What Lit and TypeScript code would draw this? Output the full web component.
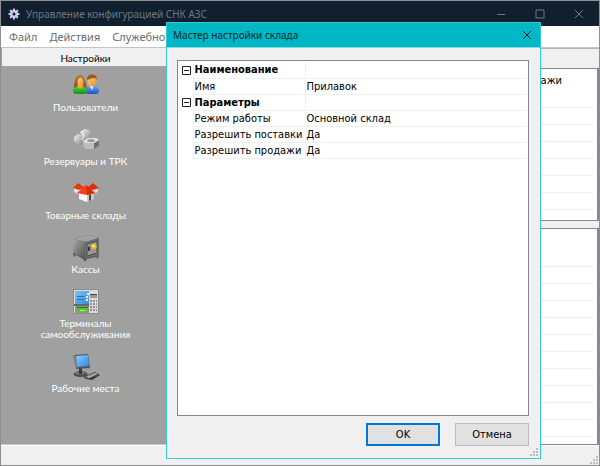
import { LitElement, html, svg, css } from "lit";
import { customElement, state } from "lit/decorators.js";

const gear = html`<svg class="gear" viewBox="0 0 24 24" aria-hidden="true">
  <g fill="#c9c9ea">
    ${[0, 45, 90, 135].map((a) => svg`<rect x="10" y="1" width="4" height="22" rx="1" transform="rotate(${a} 12 12)"/>`)}
    <circle cx="12" cy="12" r="8"/>
  </g>
  <circle cx="12" cy="12" r="3" fill="#11202f"/>
</svg>`;

const users = svg`
  <defs>
    <linearGradient id="hair" x2="0" y2="1"><stop stop-color="#b87830"/><stop offset="1" stop-color="#7a4414"/></linearGradient>
    <linearGradient id="face" x2="1" y2="1"><stop stop-color="#ffcf80"/><stop offset="1" stop-color="#e88c28"/></linearGradient>
    <linearGradient id="blue" x2="0" y2="1"><stop stop-color="#7cb0f4"/><stop offset="1" stop-color="#1850c4"/></linearGradient>
    <linearGradient id="green" x2="0" y2="1"><stop stop-color="#58d838"/><stop offset="1" stop-color="#149010"/></linearGradient>
  </defs>
  <path d="M12 17c0-3 3-5 7-5s7 2 7 6c0 2-1 3-4 3h-6c-3 0-4-1-4-4z" fill="url(#blue)"/>
  <path d="M16 12l3 5 2-5z" fill="#e8f0ff"/>
  <ellipse cx="19" cy="8" rx="4.500" ry="5.500" fill="url(#face)"/>
  <path d="M14 7c0-4 2-5.500 5-5.500s5 1.500 5 5.500c-1-2-2-2-4-2-2 1-4 1-6 2z" fill="#9a5a1c"/>
  <path d="M1 17C1 8 3 2 7 2s6 6 7 16l-6 1z" fill="url(#hair)"/>
  <path d="M0 18c0-3 3-5 7-5s7 2 7 5c0 2-1 3-4 3H4c-3 0-4-1-4-3z" fill="url(#green)"/>
  <ellipse cx="7.500" cy="10" rx="3" ry="5.500" fill="url(#face)"/>`;

const tanks = svg`
  <defs>
    <linearGradient id="steel" x2="1" y2="1"><stop stop-color="#f4f4f4"/><stop offset="1" stop-color="#7c7c7c"/></linearGradient>
  </defs>
  <path d="M8 4l4-2 4 1 3 5-3 5-7 1z" fill="url(#steel)"/>
  <path d="M1 10l4-3 5 1 2 5-3 5-5-1-3-3z" fill="url(#steel)"/>
  <path d="M7 5l4 3-2 5" fill="none" stroke="#f5f5f5"/>
  <path d="M10 14l5-3h8l3 2v6l-5 3h-8l-3-3z" fill="#bcbcbc"/>
  <path d="M21 16l5-3v6l-5 3z" fill="#707070"/>
  <path d="M10 14l5-3h8l3 2-5 3h-8z" fill="#e2e2e2"/>
  <ellipse cx="18" cy="13.500" rx="3.800" ry="1.500" fill="#969696"/>`;

const houses = svg`
  <path d="M1 7h11v6H6l-5-2z" fill="#e4e4e4"/>
  <path d="M0 7l5-5 7 5-6 2z" fill="#e83814"/>
  <path d="M14 7h11v4l-5 2h-6z" fill="#d8d8d8"/>
  <path d="M14 7l6-5 6 5-6 2z" fill="#dc300e"/>
  <path d="M6 11h8v10l-8-3z" fill="#fafafa"/>
  <path d="M14 11h7v7l-7 3z" fill="#cccccc"/>
  <path d="M16 14l2-1v6l-2 1z" fill="#484848"/>
  <path d="M4 12l9-8 9 8-8 2z" fill="#f44018"/>
  <path d="M13 4l9 8-8 2z" fill="#d82a08"/>`;

const safe = svg`
  <defs>
    <linearGradient id="door" x2="1" y2="1"><stop stop-color="#a8a8a8"/><stop offset="1" stop-color="#545454"/></linearGradient>
  </defs>
  <path d="M0 4L15 0l11 3v17l-1 4-2-2-9 2-2 3-2-3-7-4-2 2-1-3z" fill="#5c5c5c"/>
  <path d="M0 4L15 0l11 3-13 4z" fill="#a2a2a2"/>
  <path d="M0 4l12 3v16L0 18z" fill="url(#door)"/>
  <path d="M12 7l14-4v17l-14 3z" fill="#707070"/>
  <path d="M14 9l10-3v12l-10 3z" fill="#969696" stroke="#4c4c4c"/>
  <path d="M15 12l2-.500v4l-2 .500z" fill="#333"/>
  <circle cx="21" cy="11.500" r="2.700" fill="#e8b820"/>
  <circle cx="20.500" cy="11" r="1.200" fill="#fff088"/>`;

const terminal = svg`
  <defs>
    <linearGradient id="lcd" x2="1" y2="1"><stop stop-color="#7cc4f8"/><stop offset="1" stop-color="#3a8cd8"/></linearGradient>
  </defs>
  <rect x=".500" y=".500" width="25" height="24" fill="#dcdcd6" stroke="#8c8c8c"/>
  <rect x="2" y="2" width="14" height="13" fill="url(#lcd)"/>
  <path d="M4 7.500h7M4 10.500h7" stroke="#2a70bc"/>
  <path d="M14 5h2M13 8h2M13 11h2" stroke="#e6f4ff" stroke-width="2"/>
  <rect x="1" y="15" width="15" height="2" fill="#606870"/>
  <rect x="2" y="17" width="14" height="7" fill="#8c948c"/>
  <rect x="4" y="18" width="11" height="5" fill="#55c828"/>
  <path d="M4 18.500h11" stroke="#2a7818"/>
  <path d="M7 21.500h5" stroke="#b8f090"/>
  <rect x="17" y="5" width="7" height="4" fill="#999"/>
  <path d="M17 5.500h7" stroke="#444"/>
  <path d="M17 12h2M20 12h2M23 12h1M17 15h2M20 15h2M23 15h1M17 18h2M20 18h2M23 18h1M17 21h2M20 21h2M23 21h1" stroke="#909090" stroke-width="2"/>`;

const computer = svg`
  <defs>
    <linearGradient id="screen" x2="1" y2="1"><stop stop-color="#90d0ff"/><stop offset="1" stop-color="#2c84e0"/></linearGradient>
  </defs>
  <ellipse cx="7.500" cy="20" rx="7" ry="3" fill="#4c4c4c"/>
  <ellipse cx="7" cy="19" rx="5" ry="1.500" fill="#787878"/>
  <path d="M6 14h3v6H6z" fill="#383838"/>
  <path d="M0 1l15-1 2 14-14 1z" fill="#545454"/>
  <path d="M0 1h2l2 13-1 1z" fill="#8a8a8a"/>
  <path d="M3 2l12-1 1 11-12 1z" fill="url(#screen)"/>
  <path d="M10 23l12-5 5 3-8 5-6-1z" fill="#3c3c3c"/>
  <path d="M12 23l10-4 3 1-9 4z" fill="#c4c4c4"/>
  <path d="M14 23l9-3" stroke="#666" stroke-dasharray="1 1"/>`;

const sections = [
  { label: "Пользователи", icon: users },
  { label: "Резервуары и ТРК", icon: tanks },
  { label: "Товарные склады", icon: houses },
  { label: "Кассы", icon: safe },
  { label: "Терминалы самообслуживания", icon: terminal },
  { label: "Рабочие места", icon: computer },
];

const groups = [
  { title: "Наименование", rows: [["Имя", "Прилавок"]] },
  {
    title: "Параметры",
    rows: [
      ["Режим работы", "Основной склад"],
      ["Разрешить поставки", "Да"],
      ["Разрешить продажи", "Да"],
    ],
  },
];

const closeGlyph = html`<svg class="glyph" viewBox="0 0 10 10" aria-hidden="true"><path d="M1 1l8 8M9 1l-8 8"/></svg>`;

const grip = html`<svg class="grip" viewBox="0 0 8 8" aria-hidden="true">
  <path d="M6 0h2v2H6zM3 3h2v2H3zM6 3h2v2H6zM0 6h2v2H0zM3 6h2v2H3zM6 6h2v2H6z"/>
</svg>`;

const controls = css`
  * { box-sizing: border-box; }
  button { font: inherit; color: inherit; background: none; border: 0; padding: 0; margin: 0; }
  svg { display: block; overflow: visible; }
  .glyph { width: 10px; height: 10px; fill: none; stroke: currentColor; }
  .grip { width: 8px; height: 8px; fill: #bcbcbc; }
`;

@customElement("warehouse-dialog")
class WarehouseDialog extends LitElement {
  @state() closed: string[] = [];

  static styles = [controls, css`
    :host { display: flex; flex-direction: column; background: #f0f0f0; border: 1px solid #35cbd2; color: #000; }
    .bar { display: flex; align-items: center; justify-content: space-between; height: 25px; padding: 0 8px 0 6px; background: #00b7c6; color: #06282c; font: 10px/16px "Noto Sans", sans-serif; border-bottom: 1px solid #7fdce2; }
    h2 { margin: 0; font: inherit; }
    .content { flex: 1; display: flex; flex-direction: column; padding: 12px 11px 0 10px; }
    .grid { flex: 1; border: 1px solid #828790; background: #fff; padding: 1px; }
    table { width: 100%; border-collapse: collapse; table-layout: fixed; font: 11px/15px "DejaVu Sans Condensed", "DejaVu Sans", sans-serif; }
    .gutter { width: 14px; }
    .names { width: 112px; }
    th, td { height: 16px; padding: 0 0 0 1px; text-align: left; font-weight: 400; white-space: nowrap; border: 1px solid #f0f0f0; border-width: 0 0 1px 1px; }
    .edge { padding: 0 0 0 3px; border: 0; }
    .group { font-weight: 700; }
    .toggle { display: block; width: 9px; height: 9px; }
    .toggle svg { width: 9px; height: 9px; fill: none; stroke: #222; }
    .actions { display: flex; justify-content: flex-end; gap: 15px; padding: 7px 0 12px; font: 11px/16px "DejaVu Sans Condensed", "DejaVu Sans", sans-serif; }
    .action { width: 74px; height: 23px; background: #e1e1e1; border: 1px solid #bcbcbc; }
    .primary { border: 2px solid #0078d7; }
    .corner { position: absolute; right: 2px; bottom: 2px; }
  `];

  toggle(title: string) {
    this.closed = this.closed.includes(title) ? this.closed.filter((t) => t !== title) : [...this.closed, title];
  }

  render() {
    return html`
      <header class="bar"><h2>Мастер настройки склада</h2><button aria-label="Закрыть">${closeGlyph}</button></header>
      <div class="content">
        <div class="grid">
          <table>
            <colgroup><col class="gutter"><col class="names"><col></colgroup>
            ${groups.map((g) => {
              const folded = this.closed.includes(g.title);
              return html`<tbody>
                <tr>
                  <td class="edge"><button class="toggle" aria-label=${g.title} aria-expanded=${!folded} @click=${() => this.toggle(g.title)}>
                    <svg viewBox="0 0 9 9"><path d=${folded ? "M.5 .5h8v8h-8zM2 4.5h5M4.5 2v5" : "M.5 .5h8v8h-8zM2 4.5h5"}/></svg>
                  </button></td>
                  <th class="group" scope="rowgroup">${g.title}</th><td></td>
                </tr>
                ${folded ? "" : g.rows.map(([name, value]) => html`<tr><td class="edge"></td><th scope="row">${name}</th><td>${value}</td></tr>`)}
              </tbody>`;
            })}
          </table>
        </div>
        <div class="actions">
          <button class="action primary">OK</button>
          <button class="action">Отмена</button>
        </div>
      </div>
      <div class="corner">${grip}</div>`;
  }
}

@customElement("app-root")
class AppRoot extends LitElement {
  static styles = [controls, css`
    :host { display: flex; flex-direction: column; position: relative; min-height: 100vh; background: #f0f0f0; border: 1px solid #8f8f8f; box-sizing: border-box; }
    .title { display: flex; align-items: center; height: 25px; padding: 0 15px 0 7px; background: #11202f; color: #6d7780; font: 10px/16px "Noto Sans", sans-serif; }
    .gear { width: 12px; height: 12px; }
    h1 { flex: 1; margin: 0 0 0 6px; font: inherit; }
    .window { display: flex; gap: 29px; }
    .menu { display: flex; gap: 12px; height: 22px; padding: 0 8px; background: #fff; color: #6d6d6d; font: 11px/22px "Noto Sans", sans-serif; border-bottom: 1px solid #c4c4c4; }
    .main { flex: 1; display: flex; }
    .side { width: 168px; display: flex; flex-direction: column; padding-left: 1px; background: #a0a0a0; border-bottom: 1px solid #c8c8c8; font: 10px/11px Lato, Roboto, sans-serif; }
    .head { height: 18px; margin: 0; background: #f0f0f0; color: #000; text-align: center; font: inherit; line-height: 20px; }
    .items { display: flex; flex-direction: column; align-items: center; gap: 14px; padding-top: 7px; color: #fff; }
    .item { width: 96px; display: flex; flex-direction: column; align-items: center; gap: 3px; }
    .item svg { width: 26px; height: 26px; }
    .panes { flex: 1; min-width: 0; display: flex; flex-direction: column; gap: 7px; padding-top: 19px; border-top: 1px solid #b4b4b4; }
    .pane { border: 1px solid #828790; border-right-width: 2px; background: #fff; font: 11px/24px "DejaVu Sans Condensed", "DejaVu Sans", sans-serif; }
    .upper { height: 153px; }
    .lower { flex: 1; }
    .columns { height: 38px; padding-right: 35px; text-align: right; }
    .lines { height: 113px; margin-right: 3px; background: repeating-linear-gradient(#f0f0f0 0 1px, #fff 1px 17px); }
    .lower .columns { height: 37px; }
    .lower .lines { height: 175px; }
    .status { display: flex; justify-content: flex-end; align-items: flex-end; height: 20px; padding: 1px; border-top: 1px solid #fff; }
    .dialog { position: absolute; top: 21px; left: 165px; right: 58px; bottom: 6px; }
  `];

  render() {
    return html`
      <header class="title">
        ${gear}<h1>Управление конфигурацией СНК АЗС</h1>
        <div class="window">
          <button aria-label="Свернуть"><svg class="glyph" viewBox="0 0 10 10"><path d="M1 5.5h8"/></svg></button>
          <button aria-label="Развернуть"><svg class="glyph" viewBox="0 0 10 10"><path d="M1 1h8v8H1z"/></svg></button>
          <button aria-label="Закрыть">${closeGlyph}</button>
        </div>
      </header>
      <nav class="menu"><button>Файл</button><button>Действия</button><button>Служебное</button></nav>
      <div class="main">
        <aside class="side">
          <h2 class="head">Настройки</h2>
          <nav class="items">
            ${sections.map((s) => html`<button class="item"><svg viewBox="0 0 26 26" aria-hidden="true">${s.icon}</svg><span>${s.label}</span></button>`)}
          </nav>
        </aside>
        <main class="panes">
          <section class="pane upper"><div class="columns">Продажи</div><div class="lines"></div></section>
          <section class="pane lower"><div class="columns"></div><div class="lines"></div></section>
        </main>
      </div>
      <footer class="status">${grip}</footer>
      <warehouse-dialog class="dialog" role="dialog" aria-label="Мастер настройки склада"></warehouse-dialog>`;
  }
}
